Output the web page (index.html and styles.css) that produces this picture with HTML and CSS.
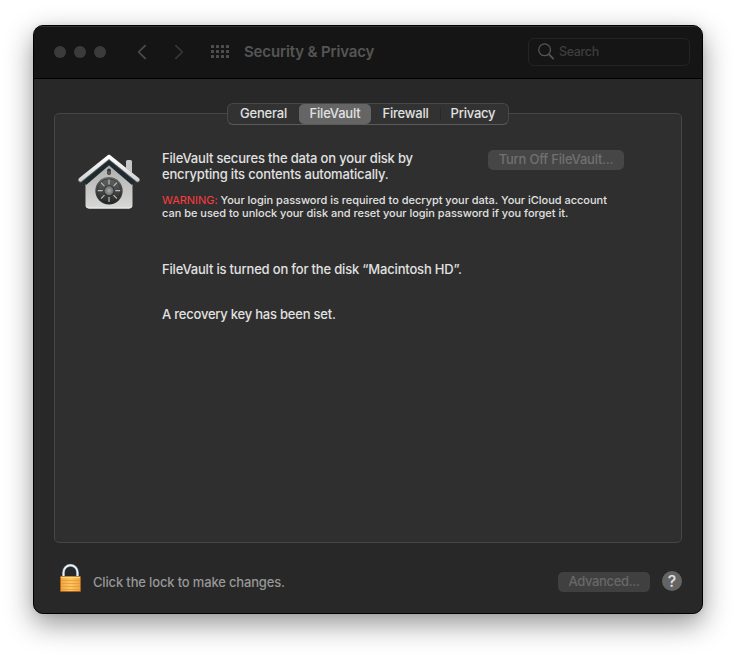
FILE: index.html
```html
<!DOCTYPE html>
<html lang="en">
<head>
<meta charset="utf-8">
<title>Security &amp; Privacy</title>
<link rel="stylesheet" href="styles.css">
</head>
<body>
<main class="window">
  <header class="titlebar">
    <div class="lights"><i></i><i></i><i></i></div>
    <svg class="chevron back" width="10" height="16" viewBox="0 0 10 16"><path d="M8.2 1.6 1.6 8l6.600 6.400"/></svg>
    <svg class="chevron forward" width="10" height="16" viewBox="0 0 10 16"><path d="M1.800 1.600 8.400 8l-6.600 6.400"/></svg>
    <div class="dots"><i></i><i></i><i></i><i></i><i></i><i></i><i></i><i></i><i></i><i></i><i></i><i></i></div>
    <h1 class="title">Security &amp; Privacy</h1>
    <div class="search">
      <svg width="16" height="17" viewBox="0 0 16 17"><circle cx="6.600" cy="6.800" r="5.900"/><path class="handle" d="m11 11.300 4.200 4.300"/></svg>
      <span>Search</span>
    </div>
  </header>
  <section class="content">
    <nav class="tabs">
      <span class="tab general">General</span>
      <span class="tab selected">FileVault</span>
      <span class="tab firewall">Firewall</span>
      <span class="tab privacy">Privacy</span>
    </nav>
    <section class="panel">
      <svg class="vault" width="64" height="60" viewBox="0 0 64 60">
        <defs>
          <linearGradient id="wall" x1="0" y1="0" x2="0" y2="1"><stop offset="0" stop-color="#aaa"/><stop offset=".55" stop-color="#c4c4c2"/><stop offset="1" stop-color="#d8d8d6"/></linearGradient>
          <linearGradient id="roof" x1="0" y1="0" x2="0" y2="1"><stop offset="0" stop-color="#fff"/><stop offset="1" stop-color="#d4d4d4"/></linearGradient>
          <linearGradient id="dial" x1="0" y1="0" x2="0" y2="1"><stop offset="0" stop-color="#666"/><stop offset="1" stop-color="#242626"/></linearGradient>
          <radialGradient id="knob"><stop offset="0" stop-color="#aaa"/><stop offset="1" stop-color="#686868"/></radialGradient>
        </defs>
        <path d="M49 7.500q0-1.500 1.500-1.500h3q1.500 0 1.500 1.500V25l-6-5z" fill="#c6c8c8"/>
        <path d="M8.500 28 32 7l23.500 21v23.500q0 3-3.500 3H12q-3.500 0-3.500-3z" fill="url(#wall)"/>
        <path d="M10 52.500q.5 1.500 2 1.500h40q1.500 0 2-1.500" fill="none" stroke="#f0f0ee"/>
        <path d="M7.500 29 32 8l24.500 21" fill="none" stroke="#202b30" stroke-width="5"/>
        <path d="M3.500 26 32 3l28.500 23" fill="none" stroke="#777" stroke-width="4.800" stroke-linecap="round" stroke-linejoin="round"/>
        <path d="M3.500 25.500 32 2.600l28.500 22.900" fill="none" stroke="url(#roof)" stroke-width="3.700" stroke-linecap="round" stroke-linejoin="round"/>
        <rect x="30.200" y="14.500" width="3.600" height="6.500" rx="1.800" fill="#333"/><path d="M32 17v3" stroke="#777"/>
        <circle cx="32" cy="36.700" r="13.700" fill="url(#dial)"/>
        <circle cx="32" cy="36.700" r="11.700" fill="none" stroke="#1d2020" stroke-width=".5"/>
        <g stroke="#bbb" stroke-width="1.200"><path d="M32 25.500v5M32 43v5M20.700 36.700h5M38.300 36.700h5M24 28.700l3.500 3.500M36.500 41.200l3.500 3.500M24 44.700l3.500-3.500M36.500 32.200l3.500-3.500"/></g>
        <circle cx="32" cy="36.700" r="5.300" fill="#242626"/><circle cx="32" cy="36.700" r="4.700" fill="url(#knob)"/>
      </svg>
      <div class="info">
        <p class="summary">FileVault secures the data on your disk by<br>encrypting its contents automatically.</p>
        <p class="notice"><span class="warn">WARNING:</span> Your login password is required to decrypt your data. Your iCloud account<br>can be used to unlock your disk and reset your login password if you forget it.</p>
        <p class="status">FileVault is turned on for the disk “Macintosh HD”.</p>
        <p class="recovery">A recovery key has been set.</p>
      </div>
      <span class="button turn-off">Turn Off FileVault...</span>
    </section>
    <footer class="footer">
      <svg class="lock" width="24" height="30" viewBox="0 0 24 30">
        <defs><linearGradient id="gold" x1="0" y1="0" x2="1" y2="0"><stop offset="0" stop-color="#f0a540"/><stop offset=".5" stop-color="#ffc660"/><stop offset="1" stop-color="#f0a540"/></linearGradient></defs>
        <path d="M4.500 14V9.500a7 7.200 0 0 1 14 0V14" fill="none" stroke="#526878" stroke-width="3"/>
        <path d="M4.500 14V9.500a7 7.200 0 0 1 14 0V14" fill="none" stroke="#edf3f8" stroke-width="1.900"/>
        <rect x="1" y="13" width="21" height="16" rx=".6" fill="#8b4a13"/>
        <rect x="1.700" y="13.500" width="19.600" height="14.700" fill="url(#gold)"/>
        <path d="M2 14.500h19" stroke="#ffdc83"/><path d="M2 17.500h19M2 20.500h19M2 23.500h19M2 26.500h19" stroke="#df9539" stroke-width=".7"/>
      </svg>
      <span class="lock-text">Click the lock to make changes.</span>
      <span class="button advanced">Advanced...</span>
      <span class="help">?</span>
    </footer>
  </section>
</main>
</body>
</html>
```

FILE: styles.css
```css
* { box-sizing: border-box; }
body {
  margin: 0;
  width: 736px;
  height: 655px;
  padding: 25px 33px;
  overflow: hidden;
  background: #fff;
  color: #e1e1e1;
  font: 450 13px/16px Inter, "Liberation Sans", sans-serif;
}
h1, p { margin: 0; }
span { white-space: nowrap; }
.window {
  width: 670px;
  height: 589px;
  border: 1px solid #000;
  border-radius: 10px;
  overflow: hidden;
  background: #282828;
  box-shadow: 0 10px 28px rgba(0, 0, 0, .42), 0 0 6px rgba(0, 0, 0, .08);
}
.titlebar {
  display: flex;
  align-items: center;
  height: 53px;
  padding: 0 12px 1px 20px;
  background: #151515;
  border-bottom: 1px solid #000;
  box-shadow: inset 0 1px #303030;
}
.lights { display: flex; gap: 8px; }
.lights i { width: 12px; height: 12px; border-radius: 50%; background: #3b3b3b; }
.chevron { fill: none; stroke: #4d4d4d; stroke-width: 1.7; stroke-linecap: round; stroke-linejoin: round; }
.back { margin-left: 31px; }
.forward { margin-left: 27px; stroke: #373737; }
.dots { display: grid; grid-template-columns: repeat(4, 3px); gap: 2px; margin-left: 27px; }
.dots i { height: 3px; background: #4e4e4e; border-radius: .5px; }
.title { margin-left: 15px; color: #555; font-size: 15px; line-height: 20px; font-weight: 600; letter-spacing: -.14px; white-space: nowrap; }
.search {
  display: flex;
  align-items: center;
  width: 162px;
  height: 28px;
  margin-left: auto;
  padding-left: 9px;
  gap: 5px;
  border: 1px solid #242424;
  border-radius: 6px;
  color: #3e3e3e;
}
.search span { padding-top: 1px; font-size: 12.5px; letter-spacing: -.35px; }
.search svg { fill: none; stroke: #555; stroke-width: 1.3; }
.search .handle { stroke-width: 1.8; stroke-linecap: round; }
.content { padding: 24px 20px 0; }
.tabs {
  position: relative;
  display: grid;
  grid-template-columns: 71px 72px 69px 68px;
  width: 282px;
  height: 22px;
  margin: 0 auto;
  border: 1px solid #484848;
  border-bottom-color: #5b5b5b;
  border-radius: 6px;
  background: #323232;
}
.tab { height: 20px; text-align: center; line-height: 18px; font-weight: 500; letter-spacing: -.22px; }
.selected { background: #656565; border-radius: 5px; }
.privacy { padding-right: 2px; background: linear-gradient(#292929, #292929) 0 4px / 1px 12px no-repeat; }
.panel {
  display: flex;
  align-items: flex-start;
  height: 430px;
  margin-top: -12px;
  padding: 36px 57px 0 22px;
  border: 1px solid #464646;
  border-radius: 5px;
  background: #2f2f2f;
}
.vault { margin-top: 4px; }
.info { width: 326px; margin-left: 21px; white-space: nowrap; }
.summary { letter-spacing: -.17px; }
.notice { margin-top: 12px; font-size: 11px; line-height: 13px; letter-spacing: -.02px; }
.warn { color: #ff3b3f; font-weight: 400; }
.status { margin-top: 41px; letter-spacing: -.18px; }
.recovery { margin-top: 29px; letter-spacing: -.22px; }
.button { height: 20px; border-radius: 5px; background: #464646; color: #707070; line-height: 19px; text-align: center; letter-spacing: -.22px; }
.turn-off { width: 136px; }
.footer { display: flex; align-items: center; height: 50px; margin-top: 14px; padding-left: 5px; }
.lock { margin-top: -8px; }
.lock-text { margin: -1px 0 0 10px; color: #979797; letter-spacing: -.16px; }
.advanced { width: 92px; margin-left: auto; background: #404040; color: #686868; letter-spacing: -.35px; }
.help { width: 20px; height: 20px; margin: -2px 0 0 12px; border-radius: 50%; background: #646464; text-align: center; font-size: 16px; line-height: 20px; }
```
